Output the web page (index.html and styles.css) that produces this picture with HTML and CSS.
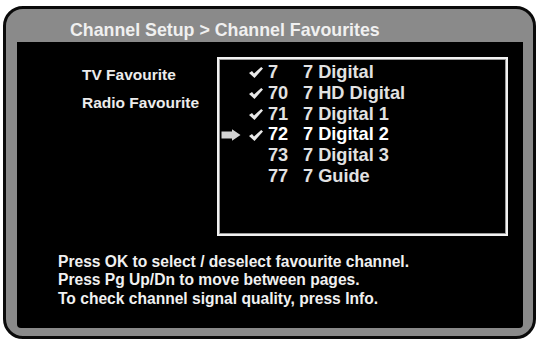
FILE: index.html
```html
<!DOCTYPE html>
<html lang="en">
<head>
    <meta charset="UTF-8">
    <title>Channel Favourites</title>
    <link rel="stylesheet" href="styles.css">
</head>
<body>
    <div class="screen">
        <div class="title">Channel Setup &gt; Channel Favourites</div>

        <div class="panel">
            <div class="main">
                <div class="labels">
                    <div class="label">TV Favourite</div>
                    <div class="label">Radio Favourite</div>
                </div>

                <!-- Channel list -->
                <div class="list">
                    <div class="row">
                        <span class="pointer"></span>
                        <span class="tick"><svg viewBox="0 0 14 11"><path d="M0 6 L3 4 L5 6.5 L12.2 0 L14 1.6 L5.5 11 Z"/></svg></span>
                        <span class="num">7</span>
                        <span class="name">7 Digital</span>
                    </div>
                    <div class="row">
                        <span class="pointer"></span>
                        <span class="tick"><svg viewBox="0 0 14 11"><path d="M0 6 L3 4 L5 6.5 L12.2 0 L14 1.6 L5.5 11 Z"/></svg></span>
                        <span class="num">70</span>
                        <span class="name">7 HD Digital</span>
                    </div>
                    <div class="row">
                        <span class="pointer"></span>
                        <span class="tick"><svg viewBox="0 0 14 11"><path d="M0 6 L3 4 L5 6.5 L12.2 0 L14 1.6 L5.5 11 Z"/></svg></span>
                        <span class="num">71</span>
                        <span class="name">7 Digital 1</span>
                    </div>
                    <div class="row selected">
                        <span class="pointer"><svg viewBox="0 0 20 12"><path d="M0.5 2.5 H11 V0.3 L19.5 6 L11 11.7 V9.5 H0.5 Z"/></svg></span>
                        <span class="tick"><svg viewBox="0 0 14 11"><path d="M0 6 L3 4 L5 6.5 L12.2 0 L14 1.6 L5.5 11 Z"/></svg></span>
                        <span class="num">72</span>
                        <span class="name">7 Digital 2</span>
                    </div>
                    <div class="row">
                        <span class="pointer"></span>
                        <span class="tick"></span>
                        <span class="num">73</span>
                        <span class="name">7 Digital 3</span>
                    </div>
                    <div class="row">
                        <span class="pointer"></span>
                        <span class="tick"></span>
                        <span class="num">77</span>
                        <span class="name">7 Guide</span>
                    </div>
                </div>
            </div>

            <div class="help">
                <p>Press OK to select / deselect favourite channel.</p>
                <p>Press Pg Up/Dn to move between pages.</p>
                <p>To check channel signal quality, press Info.</p>
            </div>
        </div>
    </div>
</body>
</html>
```

FILE: styles.css
```css
body {
    margin: 0;
    background: #fff;
    font-family: "Liberation Sans", Arial, sans-serif;
    font-weight: bold;
}

.screen {
    box-sizing: border-box;
    width: 533px;
    height: 333px;
    margin: 6px 0 0 3px;
    border: 3px solid #0a0a0a;
    border-radius: 20px;
    background: #8a8a8a;
    display: flex;
    flex-direction: column;
}

.title {
    box-sizing: border-box;
    height: 33px;
    padding: 11px 0 0 64px;
    font-size: 17.8px;
    line-height: 20px;
    color: #f0f0f0;
}

.panel {
    flex: 1;
    margin: 0 10px 8px 11px;
    background: #000;
    border-radius: 0 0 4px 4px;
    display: flex;
    flex-direction: column;
}

.main {
    display: flex;
    padding: 15px 15px 0 65px;
}

.labels {
    flex: 1;
    padding-top: 9px;
}

.label {
    font-size: 15.5px;
    line-height: 18px;
    color: #ececec;
    margin-bottom: 10px;
}

.list {
    box-sizing: border-box;
    width: 291px;
    height: 179px;
    border: 2px solid #f2f2f2;
    box-shadow: inset 0 0 0 1px #9a9a9a;
    padding-top: 3px;
}

.row {
    display: flex;
    align-items: center;
    height: 20.8px;
    font-size: 18.2px;
    color: #e2e2e2;
}

.row.selected {
    color: #fff;
}

.pointer {
    width: 20px;
    height: 12px;
    margin-left: 2px;
}

.pointer svg {
    display: block;
    width: 20px;
    height: 12px;
    fill: #d4d4d4;
}

.tick {
    width: 14px;
    height: 11px;
    margin-left: 8px;
    margin-top: 1px;
}

.tick svg {
    display: block;
    width: 14px;
    height: 11px;
    fill: #e8e8e8;
}

.num {
    width: 35px;
    margin-left: 5px;
}

.help {
    margin-top: auto;
    padding: 0 0 20px 41px;
}

.help p {
    margin: 0;
    font-size: 15.6px;
    line-height: 18.5px;
    color: #f0f0f0;
}
```
